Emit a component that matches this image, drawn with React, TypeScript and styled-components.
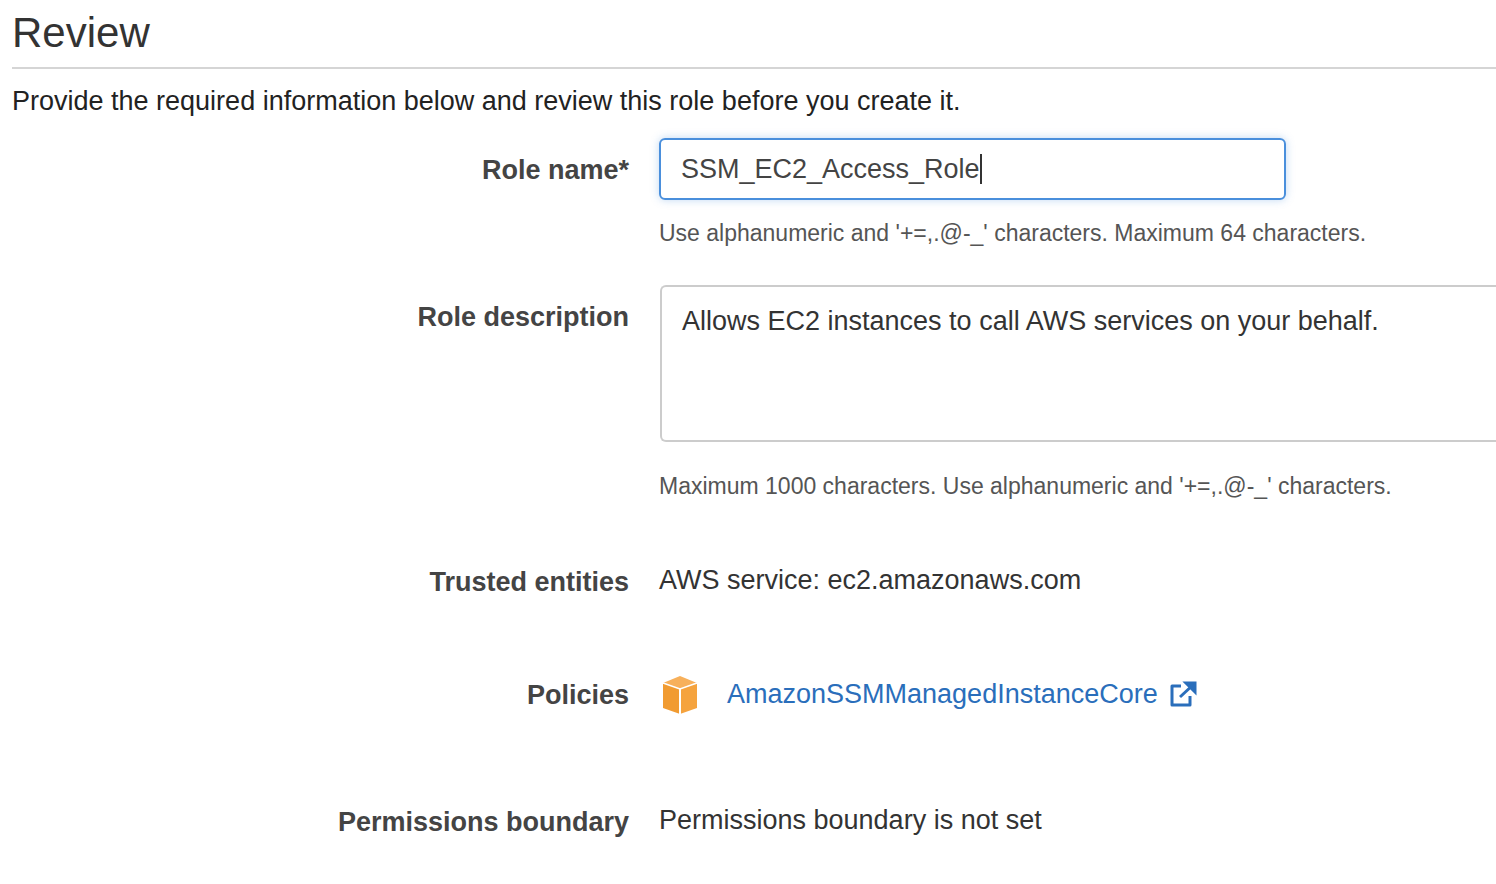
import styled, { createGlobalStyle } from "styled-components";

const Global = createGlobalStyle`
  body { margin: 0; background: #fff; font-family: "Liberation Sans", Arial, sans-serif; color: #16191f; overflow: hidden; }
`;

const Page = styled.div`
  padding: 0 0 0 12px;
  width: 1484px;
`;

const Title = styled.h1`
  margin: 0;
  padding-top: 8px;
  font-size: 42px;
  font-weight: 400;
  line-height: 50px;
  color: #333;
`;

const Rule = styled.hr`
  margin: 9px 0 0;
  border: 0;
  border-top: 2px solid #d5d5d5;
`;

const Intro = styled.p`
  margin: 14px 0 0;
  font-size: 27px;
  line-height: 36px;
  color: #222;
`;

const Form = styled.div`
  display: grid;
  grid-template-columns: 617px 1fr;
  column-gap: 30px;
  margin-top: 19px;
`;

const Label = styled.div<{ $top: number }>`
  text-align: right;
  font-weight: 700;
  font-size: 27px;
  line-height: 36px;
  color: #444;
  padding-top: ${(p) => p.$top}px;
`;

const Field = styled.div<{ $top: number; $bottom: number }>`
  padding-top: ${(p) => p.$top}px;
  padding-bottom: ${(p) => p.$bottom}px;
  display: flex;
  flex-direction: column;
  min-width: 0;
`;

const Input = styled.div`
  width: 627px;
  height: 62px;
  box-sizing: border-box;
  border: 2px solid #4a8fdc;
  border-radius: 6px;
  box-shadow: 0 0 8px rgba(74, 143, 220, 0.35);
  padding: 0 20px;
  display: flex;
  align-items: center;
  font-size: 27px;
  color: #444;
`;

const Caret = styled.span`
  display: inline-block;
  width: 2px;
  height: 30px;
  background: #333;
`;

const TextArea = styled.div`
  margin-left: 1px;
  height: 157px;
  box-sizing: border-box;
  border: 2px solid #ccc;
  border-right: none;
  border-radius: 6px 0 0 6px;
  padding: 16px 20px;
  font-size: 27px;
  line-height: 36px;
  color: #333;
  white-space: nowrap;
`;

const Help = styled.div<{ $top: number }>`
  margin-top: ${(p) => p.$top}px;
  font-size: 23px;
  line-height: 30px;
  color: #555;
`;

const Value = styled.div`
  font-size: 27px;
  line-height: 36px;
  color: #333;
  display: flex;
  align-items: center;
`;

const PolicyLink = styled.a`
  margin-left: 26px;
  color: #2a6ebb;
  text-decoration: none;
  display: flex;
  align-items: center;
  gap: 10px;
`;

function Cube() {
  return (
    <svg width="42" height="42" viewBox="0 0 42 42">
      <path d="M4 10 L21 3 L38 10 L21 16 Z" fill="#f7b05b" />
      <path d="M4 10 L21 16 L21 41 L4 35 Z" fill="#f19b31" />
      <path d="M38 10 L21 16 L21 41 L38 35 Z" fill="#f5a33e" />
      <path d="M21 16 L21 41" stroke="#fff" strokeWidth="2" />
      <path d="M4 10 L21 16 L38 10" stroke="#fff" strokeWidth="1.5" fill="none" />
    </svg>
  );
}

function ExternalIcon() {
  return (
    <svg width="30" height="28" viewBox="0 0 30 28" fill="none" stroke="#2a6ebb" strokeWidth="3">
      <path d="M13 6 H4 V25 H22 V16" strokeLinejoin="round" />
      <path d="M12 17 L26 4" />
      <path d="M17 3 H27 V12" fill="#2a6ebb" strokeWidth="1" />
      <path d="M18 3 L27 3 L27 12 Z" fill="#2a6ebb" />
    </svg>
  );
}

export default function App() {
  return (
    <Page>
      <Global />
      <Title>Review</Title>
      <Rule />
      <Intro>Provide the required information below and review this role before you create it.</Intro>
      <Form>
        <Label $top={14}>Role name*</Label>
        <Field $top={0} $bottom={37}>
          <Input>
            SSM_EC2_Access_Role<Caret />
          </Input>
          <Help $top={18}>Use alphanumeric and '+=,.@-_' characters. Maximum 64 characters.</Help>
        </Field>

        <Label $top={14}>Role description</Label>
        <Field $top={0} $bottom={61}>
          <TextArea>Allows EC2 instances to call AWS services on your behalf.</TextArea>
          <Help $top={29}>Maximum 1000 characters. Use alphanumeric and '+=,.@-_' characters.</Help>
        </Field>

        <Label $top={2}>Trusted entities</Label>
        <Field $top={0} $bottom={79}>
          <Value>AWS service: ec2.amazonaws.com</Value>
        </Field>

        <Label $top={0}>Policies</Label>
        <Field $top={0} $bottom={89}>
          <Value style={{ marginTop: -4 }}>
            <Cube />
            <PolicyLink href="#">
              AmazonSSMManagedInstanceCore
              <ExternalIcon />
            </PolicyLink>
          </Value>
        </Field>

        <Label $top={0}>Permissions boundary</Label>
        <Field $top={0} $bottom={0}>
          <Value style={{ marginTop: -2 }}>Permissions boundary is not set</Value>
        </Field>
      </Form>
    </Page>
  );
}
